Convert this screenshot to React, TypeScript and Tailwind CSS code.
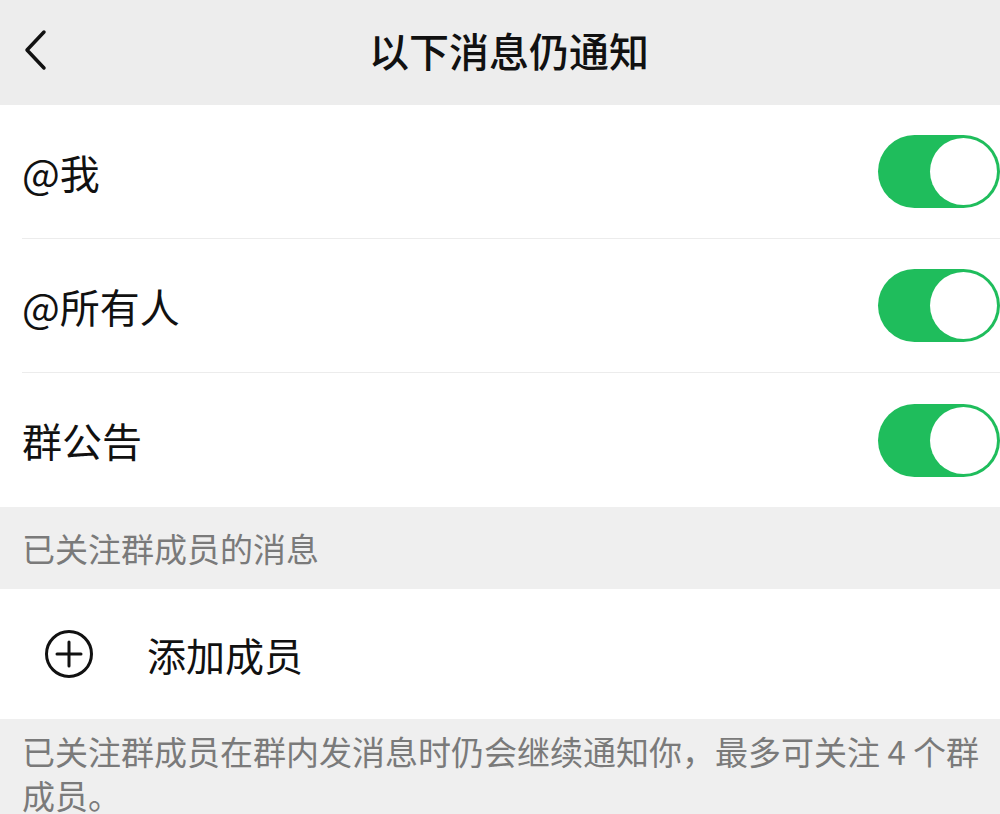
import React from "react";

const font = { fontFamily: '"Noto Sans CJK SC", "Noto Sans", sans-serif' };

function Toggle() {
  return (
    <div className="w-[122px] h-[73px] rounded-full bg-[#1fbd5c] flex items-center justify-end pr-[3px]">
      <div className="w-[67px] h-[67px] rounded-full bg-white" />
    </div>
  );
}

function Row({ label, last }: { label: string; last?: boolean }) {
  return (
    <div className="pl-[22px]">
      <div
        className={
          "h-[134px] flex items-center justify-between " +
          (last ? "" : "border-b border-[#ececec]")
        }
      >
        <span className="text-[40px] text-[#111]">{label}</span>
        <Toggle />
      </div>
    </div>
  );
}

export default function App() {
  return (
    <div className="w-[1000px] h-[814px] overflow-hidden bg-[#efefef] select-none" style={font}>
      {/* HEADER */}
      <div className="h-[105px] relative flex items-center justify-center bg-[#ededed]">
        <svg className="absolute left-[22px] top-[29px]" width="26" height="42" viewBox="0 0 26 42">
          <path d="M22 3 L5 21 L22 39" fill="none" stroke="#111" strokeWidth="3.5" strokeLinecap="round" strokeLinejoin="round" />
        </svg>
        <span className="text-[40px] text-[#111] font-medium -mt-[6px] ml-[18px]">以下消息仍通知</span>
      </div>

      {/* SWITCHES */}
      <div className="bg-white">
        <Row label="@我" />
        <Row label="@所有人" />
        <Row label="群公告" last />
      </div>

      {/* SECTION LABEL */}
      <div className="h-[82px] flex items-center pl-[22px] pt-[2px]">
        <span className="text-[33px] text-[#7a7a7a]">已关注群成员的消息</span>
      </div>

      {/* ADD MEMBER */}
      <div className="h-[130px] bg-white flex items-center">
        <svg className="ml-[44px]" width="50" height="50" viewBox="0 0 50 50">
          <circle cx="25" cy="25" r="22.5" fill="none" stroke="#111" strokeWidth="3" />
          <path d="M25 13 V37 M13 25 H37" stroke="#111" strokeWidth="3" strokeLinecap="round" />
        </svg>
        <span className="ml-[53px] text-[39px] text-[#111]">添加成员</span>
      </div>

      {/* FOOTNOTE */}
      <div className="pl-[22px] pr-[8px] pt-[10px] text-[33px] leading-[44px] text-[#7a7a7a]">
        已关注群成员在群内发消息时仍会继续通知你，最多可关注 4 个群成员。
      </div>
    </div>
  );
}
